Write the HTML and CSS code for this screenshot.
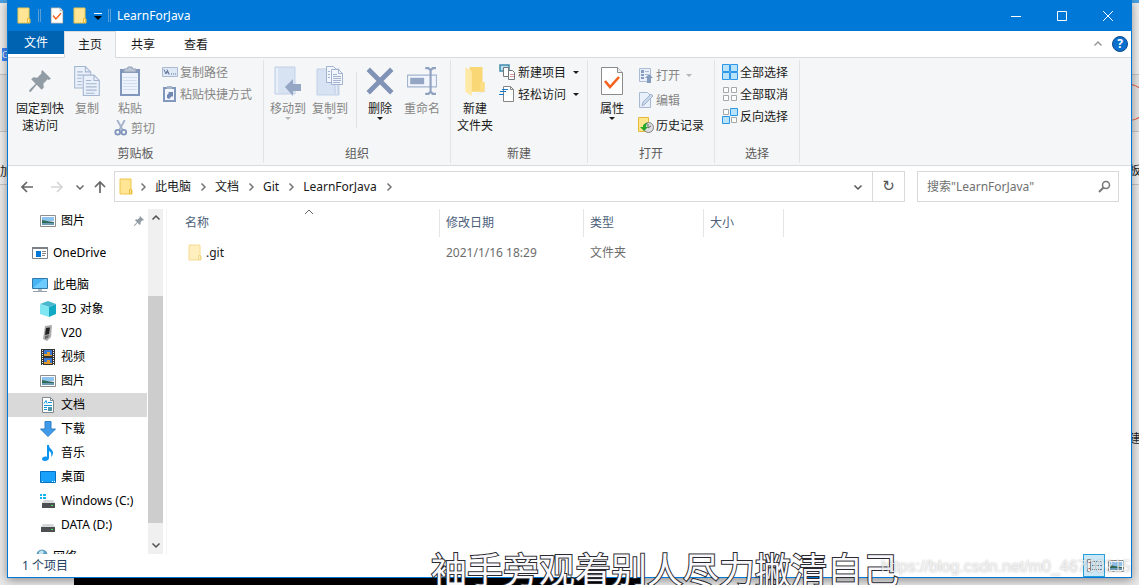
FILE: index.html
```
<!DOCTYPE html>
<html lang="zh-CN">
<head>
    <meta charset="UTF-8">
    <title>LearnForJava</title>
    <link rel="stylesheet" href="styles.css">
</head>
<body>
<svg class="sprite" aria-hidden="true">
    <symbol id="folder" viewBox="0 0 14 17">
        <path d="M1 1h11v11h1v4H1z" fill="#ffe594" stroke="#eec64d"/>
        <path d="M10.500 15.500v-4h2v4z" fill="#ffe9a2" stroke="#e9bd3b"/>
    </symbol>
    <symbol id="checkdoc" viewBox="0 0 22 30">
        <path d="M.5 1.500h16l5 5v22H.5z" fill="#fff" stroke="#8b8b8b"/>
        <path d="M16.500 1.500v5h5" fill="#eee" stroke="#8b8b8b"/>
        <path d="M4 15l5 6 9-10" fill="none" stroke="#f4611e" stroke-width="2.600"/>
    </symbol>
    <symbol id="pin" viewBox="0 0 20 20">
        <path d="M12 0l8 8-2 1-1-.5-4 4 .5 3.500-2 2-4.500-4.500L1.500 20 0 19.500.5 18 6 12.500 2 8.500l2-2 3.500.5 4-4-.5-1z" fill="#929ca4"/>
    </symbol>
    <symbol id="copy" viewBox="0 0 24 28">
        <g fill="#e9f0fb" stroke="#a5b6d0">
            <path d="M.5.500h10l5 5v15H.5z"/>
            <path d="M8.500 8.500h10l5 5v14h-15z"/>
        </g>
        <path d="M10.500.500v5h5M18.500 8.500v5h5M3 5.500h5M3 8.500h5M3 11.500h4M3 14.500h4M3 17.500h4M11 13.500h5M11 16.500h10M11 19.500h10M11 22.500h10M11 25.500h8" fill="none" stroke="#a5b6d0"/>
    </symbol>
    <symbol id="paste" viewBox="0 0 20 30">
        <path d="M0 3h20v27H0z" fill="#8197bb"/>
        <path d="M2 7h16v21H2z" fill="#edf3fc"/>
        <path d="M4 6V3h3l1-2h4l1 2h3v3z" fill="#bcc6d4" stroke="#93a3b9"/>
        <path d="M3 11.500h14M3 14.500h14M3 17.500h14M3 20.500h14M3 23.500h14" stroke="#d2deed"/>
    </symbol>
    <symbol id="scissors" viewBox="0 0 14 17">
        <path d="M3 0l6 11M11 0L5 11" stroke="#a3b3cc" stroke-width="2"/>
        <g fill="none" stroke="#8197bb" stroke-width="2">
            <circle cx="3.500" cy="13" r="2.500"/>
            <circle cx="10" cy="13" r="2.500"/>
        </g>
    </symbol>
    <symbol id="path" viewBox="0 0 16 16">
        <path d="M.5 3.500h15v9H.5z" fill="#dfe9f6" stroke="#a9b9d0"/>
        <path d="M2 5.500l2 4.500 1-3 2 3.500M5 5.500l2 4.500M9 10h1M11 10h1M13 10h1" fill="none" stroke="#61779f"/>
    </symbol>
    <symbol id="shortcut" viewBox="0 0 16 16">
        <path d="M2 2h11v13H2z" fill="#f3f7fd" stroke="#8197bb" stroke-width="2"/>
        <path d="M5 0h5v3H5z" fill="#a9b5c8"/>
        <path d="M5 12V9l2-2-1-1h5v5l-1-1-3 3z" fill="#7189b2"/>
    </symbol>
    <symbol id="moveto" viewBox="0 0 28 30">
        <path d="M1 1h20v27H1z" fill="#d7e2f3" stroke="#c3d1e7"/>
        <path d="M3 2v25" stroke="#e9f0fa" stroke-width="2"/>
        <path d="M11 21l8-8v5h8v7h-8v5z" fill="#94a6c4"/>
    </symbol>
    <symbol id="copyto" viewBox="0 0 28 30">
        <path d="M1 3h22v26H1z" fill="#d7e2f3" stroke="#c3d1e7"/>
        <path d="M19 28V18h3v10" fill="#e3ebf7" stroke="#bccce4"/>
        <g fill="#f3f7fd" stroke="#a1b3d0">
            <path d="M10.500.500h7l4 4v12h-11z"/>
            <path d="M15.500 3.500h7l4 4v11h-11z"/>
        </g>
        <path d="M22.500 3.500v4h4M12 5.500h2M12 8.500h2M12 11.500h2M17 8.500h4M17 10.500h8M17 12.500h8M17 14.500h8M17 16.500h7" fill="none" stroke="#a1b3d0"/>
    </symbol>
    <symbol id="delete" viewBox="0 0 28 28">
        <path d="M3 3l22 22M25 3L3 25" stroke="#8093b6" stroke-width="4.500"/>
    </symbol>
    <symbol id="rename" viewBox="0 0 28 28">
        <path d="M.5 8.500h27v11H.5z" fill="#f2f6fc" stroke="#a3b4cf"/>
        <path d="M3 11h13v6H3z" fill="#94a6c4"/>
        <path d="M17 2h3l2 2 2-2h3M17 26h3l2-2 2 2h3M22 4v20" fill="none" stroke="#8fa1c0" stroke-width="2"/>
    </symbol>
    <symbol id="bigfolder" viewBox="0 0 20 28">
        <path d="M5 1h12v14h2v9H5z" fill="#f9d775"/>
        <path d="M1 1l6 4v23l-6-4z" fill="#ffe9a6"/>
        <path d="M15 15h3v9h-3z" fill="#ffdf85"/>
        <path d="M8 27l10-3h2z" fill="#ddd"/>
    </symbol>
    <symbol id="newitem" viewBox="0 0 16 16">
        <path d="M1 1h9v6H1z" fill="#b9e3f4" stroke="#428cab" stroke-width="1.500"/>
        <path d="M4.500 3.500h5v9h-5zM9.500 6.500h4l2 2v7h-6z" fill="#fff" stroke="#777"/>
        <path d="M11 10.500h4M11 12.500h4" stroke="#d89a9a"/>
    </symbol>
    <symbol id="easy" viewBox="0 0 16 16">
        <path d="M4.500.500h7l3 3v12h-10z" fill="#fff" stroke="#858585"/>
        <path d="M11.500.500v3h3" fill="none" stroke="#858585"/>
        <path d="M3 3.500h6M1 5.500h6M0 8.500h5" stroke="#1979ca"/>
    </symbol>
    <symbol id="open" viewBox="0 0 16 16">
        <path d="M1.500 1.500h11v13h-11z" fill="#e9f0fa" stroke="#adbcd4"/>
        <path d="M3 3h3v3H3zM3 7h3v2H3zM3 10h3v2H3z" fill="#869bc0"/>
        <path d="M7 4.500h4M7 7.500h3" stroke="#adbcd4"/>
        <path d="M7 11l4-4 4 4h-2v5H9v-5z" fill="#869bc0"/>
    </symbol>
    <symbol id="edit" viewBox="0 0 16 16">
        <path d="M1.500.500h8l3 3v12h-11z" fill="#e8f0fb" stroke="#a9b9d2"/>
        <path d="M4 14l1-4 8-8 2 2-8 8z" fill="#c9d7eb" stroke="#a0b3d0"/>
    </symbol>
    <symbol id="history" viewBox="0 0 16 16">
        <path d="M.5.500h10v14H.5z" fill="#ffe58b" stroke="#e3b83c"/>
        <circle cx="10.500" cy="10.500" r="5" fill="#ddd" stroke="#858585"/>
        <path d="M10 11l3-2M10 7v4" stroke="#666"/>
        <path d="M2 10h3c0-3 2-4 5-4-2 1-2 3-2 4h2l-4 4z" fill="#25a829"/>
    </symbol>
    <symbol id="selectall" viewBox="0 0 16 16">
        <path d="M.5.500h7v7h-7zM8.500.500h7v7h-7zM.5 8.500h7v7h-7zM8.500 8.500h7v7h-7z" fill="#b9e2fb" stroke="#2e96e6"/>
    </symbol>
    <symbol id="selectnone" viewBox="0 0 16 16">
        <path d="M1.500 1.500h5v5h-5zM9.500 1.500h5v5h-5zM1.500 9.500h5v5h-5zM9.500 9.500h5v5h-5z" fill="#fff" stroke="#a8a8a8"/>
    </symbol>
    <symbol id="invert" viewBox="0 0 16 16">
        <path d="M1.500 1.500h5v5h-5zM9.500 9.500h5v5h-5z" fill="#fff" stroke="#a8a8a8"/>
        <path d="M8.500.500h7v7h-7zM.5 8.500h7v7h-7z" fill="#b9e2fb" stroke="#2e96e6"/>
    </symbol>
    <symbol id="picture" viewBox="0 0 16 16">
        <path d="M.5 2.500h15v11H.5z" fill="#fff" stroke="#8d8d8d"/>
        <path d="M2 4h12v4H2z" fill="#8fc3ef"/>
        <path d="M2 7l5 1 7 1v1H2z" fill="#31695b"/>
        <path d="M2 10h12v2H2z" fill="#6c9bb9"/>
    </symbol>
    <symbol id="onedrive" viewBox="0 0 16 16">
        <path d="M.5 2.500h15v11H.5z" fill="#fff" stroke="#7c8288"/>
        <path d="M0 2h16v2H0z" fill="#7c8288"/>
        <path d="M4 6h5v6H4z" fill="#0078d7"/>
        <path d="M10 6.500h4M10 8.500h4M10 10.500h3" stroke="#888"/>
    </symbol>
    <symbol id="computer" viewBox="0 0 16 16">
        <path d="M.5 1.500h15v10H.5z" fill="#47b4f5" stroke="#3379a8"/>
        <path d="M1 11L12 2h3v9z" fill="#6dcbff"/>
        <path d="M6 12h4v2H6z" fill="#b4bcc4"/>
        <path d="M1 14.500h14" stroke="#93a0ab"/>
    </symbol>
    <symbol id="cube" viewBox="0 0 16 16">
        <path d="M0 3l8-3 8 3-7 3z" fill="#49b8cc"/>
        <path d="M0 3l9 3v10l-9-3z" fill="#7fe6f1"/>
        <path d="M9 6l7-3v10l-7 3z" fill="#12a9c4"/>
    </symbol>
    <symbol id="phone" viewBox="0 0 16 16">
        <path d="M5 1l7-1-1 12-4 4-4-2z" fill="#aaa"/>
        <path d="M6 3l4-.5L9 9l-4 1z" fill="#222"/>
        <path d="M5 11l4-1-1 3-3 1z" fill="#666"/>
    </symbol>
    <symbol id="film" viewBox="0 0 16 16">
        <path d="M1 0h14v16H1z" fill="#333"/>
        <path d="M2.500 1v15M13.500 1v15" stroke="#fff" stroke-dasharray="1 1"/>
        <path d="M4 1h8v6H4zM4 9h8v6H4z" fill="#3975d4"/>
        <path d="M4 5h3V3h3v3h2v1H4zM4 13h3v-2h3v3h2v1H4z" fill="#e0992c"/>
    </symbol>
    <symbol id="document" viewBox="0 0 16 16">
        <path d="M2.500.500h8l3 3v12h-11z" fill="#fff" stroke="#7f8990"/>
        <path d="M10.500.500v3h3" fill="none" stroke="#7f8990"/>
        <path d="M4 6.500l2-3 1 3M8 5.500h4M4 8.500h8M4 10.500h3M4 12.500h3" fill="none" stroke="#1695d8"/>
        <path d="M8 10h4v4H8z" fill="#4c93ad"/>
    </symbol>
    <symbol id="download" viewBox="0 0 16 16">
        <path d="M5 .5h6V8h4.500L8 15.500.5 8H5z" fill="#3f9ae8" stroke="#2d7fc8"/>
    </symbol>
    <symbol id="music" viewBox="0 0 16 16">
        <path d="M7 0h2c0 4 4 4 4 8 0 2-1 3-2 4 1-3 0-5-2-6v7c0 2-2 3-4 3s-3-1-3-2c0-2 3-3 5-2z" fill="#0d94ee"/>
    </symbol>
    <symbol id="desktop" viewBox="0 0 16 16">
        <path d="M.5 2.500h15v11H.5z" fill="#19a0fa" stroke="#0072c4"/>
        <path d="M2 12.500h2M12 12.500h3" stroke="#fff" stroke-dasharray="1 1"/>
    </symbol>
    <symbol id="drive" viewBox="0 0 16 16">
        <path d="M3 7h10l2 3H1z" fill="#d5d7d9"/>
        <path d="M1 10h14v5H1z" fill="#4d5052"/>
        <path d="M11 12.500h2" stroke="#55e05a"/>
    </symbol>
    <symbol id="windrive" viewBox="0 0 16 16">
        <path d="M4 7h9l2 3H2z" fill="#d5d7d9"/>
        <path d="M2 10h13v5H2z" fill="#4d5052"/>
        <path d="M11 12.500h2" stroke="#55e05a"/>
        <path d="M0 1h2v2H0zM3 1h3v2H3zM0 4h2v2H0zM3 4h3v2H3z" fill="#13b5ec"/>
    </symbol>
    <symbol id="network" viewBox="0 0 16 16">
        <circle cx="10" cy="6" r="5.500" fill="#5d9fc4"/>
        <path d="M7 3q3-3 5 0l-2 3-3 1z" fill="#c8e4ef"/>
        <path d="M1 9h8v5H1z" fill="#378cc2"/>
    </symbol>
    <symbol id="magnifier" viewBox="0 0 16 16">
        <circle cx="10" cy="6" r="3.500" fill="none" stroke="#777" stroke-width="1.500"/>
        <path d="M7.500 8.500L3 13" stroke="#777" stroke-width="2"/>
    </symbol>
    <symbol id="left" viewBox="0 0 16 16">
        <path d="M14 8H3M8 3L3 8l5 5" fill="none" stroke="currentColor" stroke-width="1.700"/>
    </symbol>
    <symbol id="right" viewBox="0 0 16 16">
        <path d="M2 8h11M8 3l5 5-5 5" fill="none" stroke="currentColor" stroke-width="1.700"/>
    </symbol>
    <symbol id="up" viewBox="0 0 16 16">
        <path d="M8 14V3M3 8l5-5 5 5" fill="none" stroke="currentColor" stroke-width="1.700"/>
    </symbol>
    <symbol id="chevron" viewBox="0 0 10 10">
        <path d="M1.500 3.500L5 7l3.500-3.500" fill="none" stroke="currentColor" stroke-width="1.500"/>
    </symbol>
    <symbol id="details" viewBox="0 0 16 16">
        <path d="M1.500 1.500h3v12h-3z" fill="#fff" stroke="#888"/>
        <path d="M2 4.500h2M2 10.500h2" stroke="#c55"/>
        <path d="M6 3.500h10M6 7.500h10M6 11.500h10" stroke="#778" stroke-dasharray="3 1"/>
    </symbol>
</svg>

<div class="backdrop">
    <span class="badge">G</span>
    <span class="edge-text edge-left">加</span>
    <span class="edge-text edge-right">板</span>
    <span class="edge-text edge-low">建</span>
    <span class="ring"></span>
    <span class="blackbar"></span>
</div>

<div class="window">
    <header class="titlebar">
        <svg class="title-icon"><use href="#folder"/></svg>
        <i class="title-sep"></i>
        <svg class="title-icon"><use href="#checkdoc"/></svg>
        <svg class="title-icon"><use href="#folder"/></svg>
        <button class="customize" aria-label="自定义快速访问工具栏"><i class="arrow"></i></button>
        <i class="title-sep"></i>
        <span class="title">LearnForJava</span>
        <div class="controls">
            <button aria-label="最小化"><svg viewBox="0 0 10 10"><path d="M0 5.500h10"/></svg></button>
            <button aria-label="最大化"><svg viewBox="0 0 10 10"><path d="M.5.500h9v9h-9z"/></svg></button>
            <button aria-label="关闭"><svg viewBox="0 0 10 10"><path d="M0 0l10 10M10 0L0 10"/></svg></button>
        </div>
    </header>

    <nav class="tabs">
        <button class="tab file">文件</button>
        <button class="tab active">主页</button>
        <button class="tab">共享</button>
        <button class="tab">查看</button>
        <div class="tab-tools">
            <button class="collapse" aria-label="折叠功能区"><svg class="chev flip"><use href="#chevron"/></svg></button>
            <button class="help" aria-label="帮助">?</button>
        </div>
    </nav>

    <section class="ribbon">
        <div class="group clipboard">
            <div class="tools">
                <button class="big wide"><svg class="pin-icon"><use href="#pin"/></svg>固定到快<br>速访问</button>
                <button class="big narrow" disabled><svg><use href="#copy"/></svg>复制</button>
                <div class="stack">
                    <button class="big" disabled><svg><use href="#paste"/></svg>粘贴</button>
                    <button class="small cut" disabled><svg><use href="#scissors"/></svg>剪切</button>
                </div>
                <div class="list">
                    <button class="small" disabled><svg><use href="#path"/></svg>复制路径</button>
                    <button class="small" disabled><svg><use href="#shortcut"/></svg>粘贴快捷方式</button>
                </div>
            </div>
            <div class="caption">剪贴板</div>
        </div>
        <div class="group organize">
            <div class="tools">
                <button class="big" disabled><svg><use href="#moveto"/></svg>移动到<i class="arrow"></i></button>
                <button class="big" disabled><svg><use href="#copyto"/></svg>复制到<i class="arrow"></i></button>
                <i class="divider"></i>
                <button class="big"><svg><use href="#delete"/></svg>删除<i class="arrow"></i></button>
                <button class="big" disabled><svg><use href="#rename"/></svg>重命名</button>
            </div>
            <div class="caption">组织</div>
        </div>
        <div class="group new">
            <div class="tools">
                <button class="big"><svg><use href="#bigfolder"/></svg>新建<br>文件夹</button>
                <div class="list">
                    <button class="small"><svg><use href="#newitem"/></svg>新建项目<i class="arrow"></i></button>
                    <button class="small"><svg><use href="#easy"/></svg>轻松访问<i class="arrow"></i></button>
                </div>
            </div>
            <div class="caption">新建</div>
        </div>
        <div class="group open">
            <div class="tools">
                <button class="big"><svg><use href="#checkdoc"/></svg>属性<i class="arrow"></i></button>
                <div class="list loose">
                    <button class="small" disabled><svg><use href="#open"/></svg>打开<i class="arrow"></i></button>
                    <button class="small" disabled><svg><use href="#edit"/></svg>编辑</button>
                    <button class="small"><svg><use href="#history"/></svg>历史记录</button>
                </div>
            </div>
            <div class="caption">打开</div>
        </div>
        <div class="group select">
            <div class="tools">
                <div class="list">
                    <button class="small"><svg><use href="#selectall"/></svg>全部选择</button>
                    <button class="small"><svg><use href="#selectnone"/></svg>全部取消</button>
                    <button class="small"><svg><use href="#invert"/></svg>反向选择</button>
                </div>
            </div>
            <div class="caption">选择</div>
        </div>
    </section>

    <section class="navbar">
        <button class="nav" aria-label="后退"><svg><use href="#left"/></svg></button>
        <button class="nav" aria-label="前进" disabled><svg><use href="#right"/></svg></button>
        <button class="nav recent" aria-label="最近浏览的位置"><svg class="chev"><use href="#chevron"/></svg></button>
        <button class="nav up" aria-label="上移"><svg><use href="#up"/></svg></button>
        <div class="address">
            <svg class="title-icon"><use href="#folder"/></svg>
            <svg class="chev side"><use href="#chevron"/></svg>
            <a href="#">此电脑</a><svg class="chev side"><use href="#chevron"/></svg>
            <a href="#">文档</a><svg class="chev side"><use href="#chevron"/></svg>
            <a href="#">Git</a><svg class="chev side"><use href="#chevron"/></svg>
            <a href="#">LearnForJava</a><svg class="chev side"><use href="#chevron"/></svg>
            <button class="history" aria-label="以前的位置"><svg class="chev"><use href="#chevron"/></svg></button>
            <button class="refresh" aria-label="刷新">↻</button>
        </div>
        <div class="search">
            <input type="text" placeholder="搜索&quot;LearnForJava&quot;" aria-label="搜索">
            <svg><use href="#magnifier"/></svg>
        </div>
    </section>

    <main class="content">
        <aside class="sidebar">
            <a class="item sub" href="#"><svg><use href="#picture"/></svg>图片<svg class="pinned"><use href="#pin"/></svg></a>
            <a class="item root" href="#"><svg><use href="#onedrive"/></svg>OneDrive</a>
            <a class="item root" href="#"><svg><use href="#computer"/></svg>此电脑</a>
            <a class="item sub" href="#"><svg><use href="#cube"/></svg>3D 对象</a>
            <a class="item sub" href="#"><svg><use href="#phone"/></svg>V20</a>
            <a class="item sub" href="#"><svg><use href="#film"/></svg>视频</a>
            <a class="item sub" href="#"><svg><use href="#picture"/></svg>图片</a>
            <a class="item sub selected" href="#"><svg><use href="#document"/></svg>文档</a>
            <a class="item sub" href="#"><svg><use href="#download"/></svg>下载</a>
            <a class="item sub" href="#"><svg><use href="#music"/></svg>音乐</a>
            <a class="item sub" href="#"><svg><use href="#desktop"/></svg>桌面</a>
            <a class="item sub" href="#"><svg><use href="#windrive"/></svg>Windows (C:)</a>
            <a class="item sub" href="#"><svg><use href="#drive"/></svg>DATA (D:)</a>
            <a class="item root" href="#"><svg><use href="#network"/></svg>网络</a>
        </aside>
        <div class="scrollbar">
            <svg class="chev flip"><use href="#chevron"/></svg>
            <div class="track"><div class="thumb"></div></div>
            <svg class="chev"><use href="#chevron"/></svg>
        </div>
        <div class="files">
            <table>
                <thead>
                <tr>
                    <th class="col-name">名称<svg class="chev sort" viewBox="0 0 10 10"><path d="M1 7l4-4 4 4"/></svg></th>
                    <th class="col-date">修改日期</th>
                    <th class="col-type">类型</th>
                    <th class="col-size">大小</th>
                </tr>
                </thead>
                <tbody>
                <tr>
                    <td><div class="filename"><svg><use href="#folder"/></svg>.git</div></td>
                    <td>2021/1/16 18:29</td>
                    <td>文件夹</td>
                    <td></td>
                </tr>
                </tbody>
            </table>
        </div>
    </main>

    <footer class="status">
        <span>1 个项目</span>
        <div class="views">
            <button class="on" aria-label="详细信息"><svg><use href="#details"/></svg></button>
            <button aria-label="大图标"><svg><use href="#picture"/></svg></button>
        </div>
    </footer>
</div>

<div class="lyric">袖手旁观着别人尽力撇清自己</div>
<div class="watermark">https://blog.csdn.net/m0_46700215</div>
</body>
</html>
```
FILE: styles.css
```
* {
    box-sizing: border-box;
}

body {
    margin: 0;
    padding: 0 7px;
    height: 100vh;
    overflow: hidden;
    position: relative;
    background-color: #e6e6e6;
    font-family: "Noto Sans", "Noto Sans CJK SC", sans-serif;
    font-size: 12px;
    line-height: 17px;
    color: #1a1a1a;
}

button {
    font: inherit;
    color: inherit;
    background: none;
    border: none;
    padding: 0;
}

a {
    color: inherit;
    text-decoration: none;
}

svg {
    display: block;
    flex: none;
    width: 16px;
    height: 16px;
}

.sprite {
    position: absolute;
    width: 0;
    height: 0;
}

/* what shows around the window */
.backdrop {
    position: absolute;
    inset: 0;
    overflow: hidden;
    background: linear-gradient(#4a9fe0 0 3px, #ededed 3px 74px, #c4c4c4 74px 75px, #e2e2e2 75px 131px, #c4c4c4 131px 132px, #ededed 132px 184px, #c4c4c4 184px 185px, #e8e8e8 185px);
}

.badge {
    position: absolute;
    left: 2px;
    top: 48px;
    width: 14px;
    height: 13px;
    font-size: 9px;
    line-height: 13px;
    background-color: #4285f4;
    color: white;
}

.edge-text {
    position: absolute;
    color: #222;
}

.edge-left {
    left: 0;
    top: 163px;
}

.edge-right {
    right: -2px;
    top: 162px;
}

.edge-low {
    right: -2px;
    top: 430px;
}

.ring {
    position: absolute;
    right: -8px;
    top: 84px;
    width: 36px;
    height: 37px;
    border: 1px solid #e8583b;
    border-radius: 50%;
}

.blackbar {
    position: absolute;
    left: 74px;
    bottom: 0;
    width: 50%;
    height: 12px;
    background-color: black;
}

.window {
    position: relative;
    display: flex;
    flex-direction: column;
    height: calc(100vh - 7px);
    background-color: white;
    border: 1px solid #0078d7;
    border-top: none;
    box-shadow: 0 2px 9px rgba(0, 0, 0, 0.4);
}

/* title bar */
.titlebar {
    display: flex;
    align-items: center;
    height: 31px;
    flex: none;
    padding-left: 9px;
    background-color: #0078d7;
    color: white;
}

.title-icon {
    width: 14px;
    height: 17px;
}

.title-sep {
    width: 3px;
    height: 13px;
    margin: 0 9px 0 7px;
    border: 1px solid #5b9fd6;
    border-width: 0 1px;
}

.titlebar .title-icon + .title-icon {
    margin-left: 9px;
}

.customize {
    margin-left: 5px;
    padding: 2px 2px 0;
    color: black;
}

.customize::before {
    content: "";
    display: block;
    height: 1px;
    margin-bottom: 2px;
    background-color: white;
}

.customize + .title-sep {
    margin: 0 6px 0 4px;
}

.title {
    flex: 1;
}

.controls {
    display: flex;
    align-self: stretch;
}

.controls button {
    width: 46px;
    display: flex;
    align-items: center;
    justify-content: center;
}

.controls svg {
    width: 10px;
    height: 10px;
    fill: none;
    stroke: white;
}

.arrow {
    width: 0;
    height: 0;
    flex: none;
    border: 3px solid transparent;
    border-top-color: currentColor;
    border-bottom: none;
}

.customize .arrow {
    display: block;
    border-width: 4px;
    border-bottom: none;
}

/* tabs */
.tabs {
    display: flex;
    align-items: stretch;
    height: 27px;
    flex: none;
    gap: 1px;
    border-bottom: 1px solid #dadbdc;
}

.tab {
    width: 52px;
    height: 26px;
}

.tab.file {
    width: 56px;
    height: 23px;
    margin-right: -1px;
    background-color: #0063b1;
    color: white;
}

.tab.active {
    height: 27px;
    padding-bottom: 1px;
    border: 1px solid #dadbdc;
    border-bottom: none;
    background-color: #f5f6f7;
}

.tab-tools {
    display: flex;
    align-items: center;
    gap: 9px;
    margin-left: auto;
    padding-right: 3px;
}

.collapse {
    color: #999;
}

.help {
    width: 16px;
    height: 16px;
    border-radius: 50%;
    border: 1px solid #0a4a8c;
    background-color: #0d6fcd;
    color: white;
    font-weight: bold;
    line-height: 14px;
}

.chev {
    width: 10px;
    height: 10px;
}

.flip {
    transform: rotate(180deg);
}

.side {
    transform: rotate(-90deg);
}

/* ribbon */
.ribbon {
    display: flex;
    height: 108px;
    flex: none;
    padding: 2px 0;
    background-color: #f5f6f7;
    border-bottom: 1px solid #dadbdc;
}

.group {
    display: flex;
    flex-direction: column;
    justify-content: space-between;
    padding: 0 3px;
    border-right: 1px solid #e2e3e4;
}

.clipboard {
    width: 256px;
}

.organize {
    width: 187px;
}

.new {
    width: 137px;
}

.open {
    width: 127px;
}

.select {
    width: 85px;
}

.tools {
    display: flex;
    align-items: flex-start;
}

.caption {
    text-align: center;
    color: #5a5a5a;
    padding-bottom: 1px;
}

.big {
    display: flex;
    flex-direction: column;
    align-items: center;
    width: 42px;
    padding-top: 6px;
    white-space: nowrap;
}

.big svg {
    width: 30px;
    height: 30px;
    margin-bottom: 4px;
}

.big .pin-icon {
    width: 22px;
    height: 22px;
    margin: 4px 0 8px;
}

.big.wide {
    width: 58px;
}

.big.narrow {
    width: 36px;
}

.stack {
    display: flex;
    flex-direction: column;
    width: 54px;
    padding-left: 4px;
}

.list {
    display: flex;
    flex-direction: column;
    padding: 1px 0 0 3px;
}

.loose {
    gap: 3px;
    padding-top: 4px;
}

.small {
    display: flex;
    align-items: center;
    gap: 2px;
    height: 22px;
    white-space: nowrap;
}

.small .arrow {
    margin-left: 4px;
}

.new .small {
    gap: 3px;
}

.cut {
    padding-left: 4px;
}

.ribbon button:disabled {
    color: #868686;
}

.ribbon button:disabled .arrow {
    color: #b5b5b5;
}

.divider {
    width: 1px;
    height: 56px;
    margin: 12px 2px 0 5px;
    background-color: #e0e1e2;
}

.open .list {
    padding-left: 5px;
}

.select .list {
    padding-left: 4px;
}

/* address row */
.navbar {
    display: flex;
    flex: none;
    height: 43px;
    padding: 5px 12px 7px 11px;
}

.nav {
    width: 30px;
    padding-right: 14px;
    color: #666;
}

.nav:disabled {
    color: #d5d5d5;
}

.nav.recent {
    width: 16px;
    padding: 0 6px 0 0;
    margin-left: -4px;
}

.nav.up {
    width: 22px;
    padding-right: 0;
    margin-left: 1px;
}

.address {
    display: flex;
    align-items: center;
    flex: 1;
    margin-right: 12px;
    padding-left: 4px;
    border: 1px solid #d9d9d9;
}

.address .side {
    margin: 0 7px;
    color: #777;
}

.address .title-icon + .side {
    margin-left: 5px;
}

.history {
    margin-left: auto;
    padding: 0 9px;
    color: #555;
}

.refresh {
    width: 32px;
    align-self: stretch;
    border-left: 1px solid #d9d9d9;
    font-family: "DejaVu Sans", sans-serif;
    font-size: 15px;
    color: #555;
}

.search {
    display: flex;
    align-items: center;
    width: 202px;
    padding: 0 6px 0 9px;
    border: 1px solid #d9d9d9;
}

.search input {
    flex: 1;
    min-width: 0;
    border: none;
    padding: 0;
    font: inherit;
}

.search input::placeholder {
    color: #707070;
}

/* content */
.content {
    display: flex;
    flex: 1;
    min-height: 0;
}

.sidebar {
    width: 139px;
    flex: none;
    overflow: hidden;
}

.item {
    display: flex;
    align-items: center;
    gap: 5px;
    height: 24px;
    padding: 0 0 1px 32px;
    white-space: nowrap;
    color: black;
}

.root {
    padding-left: 24px;
    margin-top: 8px;
}

.selected {
    background-color: #d9d9d9;
}

.pinned {
    width: 10px;
    height: 10px;
    margin: 0 3px 0 auto;
}

.scrollbar {
    display: flex;
    flex-direction: column;
    align-items: center;
    width: 15px;
    flex: none;
    margin-left: 1px;
    padding: 4px 0;
    background-color: #f0f0f0;
    color: #505050;
}

.track {
    flex: 1;
    align-self: stretch;
    margin: 3px 0;
    padding-top: 70px;
}

.thumb {
    height: 94%;
    background-color: #cdcdcd;
}

.files {
    flex: 1;
    margin-left: 3px;
    padding-left: 12px;
    border-left: 1px solid #f4f4f4;
}

table {
    table-layout: fixed;
    border-collapse: separate;
    border-spacing: 0;
    width: 605px;
    color: #6d6d6d;
}

th {
    position: relative;
    height: 28px;
    padding: 0 6px 2px;
    border-right: 1px solid #e5e5e5;
    text-align: left;
    font-weight: normal;
    color: #4c607a;
}

td {
    height: 32px;
    padding: 0 6px 2px;
}

.col-name {
    width: 261px;
}

.col-date {
    width: 144px;
}

.col-type {
    width: 120px;
}

.col-size {
    width: 80px;
}

.sort {
    position: absolute;
    left: 48%;
    top: -2px;
    fill: none;
    stroke: #666;
}

.filename {
    display: flex;
    align-items: center;
    gap: 4px;
    padding-left: 3px;
    color: #1a1a1a;
}

.filename svg {
    width: 14px;
    height: 17px;
    opacity: 0.6;
}

/* status bar */
.status {
    display: flex;
    align-items: center;
    justify-content: space-between;
    flex: none;
    height: 23px;
    padding-left: 14px;
    color: #24405f;
}

.views {
    display: flex;
    padding-right: 4px;
}

.views button {
    width: 22px;
    height: 23px;
    padding-left: 3px;
}

.views .on {
    border: 1px solid #26a0da;
    background-color: #cce8f6;
    padding-left: 2px;
}

/* overlays */
.lyric {
    position: absolute;
    left: 431px;
    bottom: -9px;
    font-family: "Noto Sans CJK SC", sans-serif;
    font-size: 36px;
    line-height: 52px;
    white-space: nowrap;
    color: #f8f8fc;
    -webkit-text-stroke: 2px #2a2a30;
    paint-order: stroke fill;
}

.watermark {
    position: absolute;
    right: 8px;
    bottom: 9px;
    font-family: "Liberation Sans", sans-serif;
    font-size: 16px;
    line-height: 18px;
    color: rgba(255, 255, 255, 0.7);
    text-shadow: 0 0 2px rgba(0, 0, 0, 0.3);
}
```
